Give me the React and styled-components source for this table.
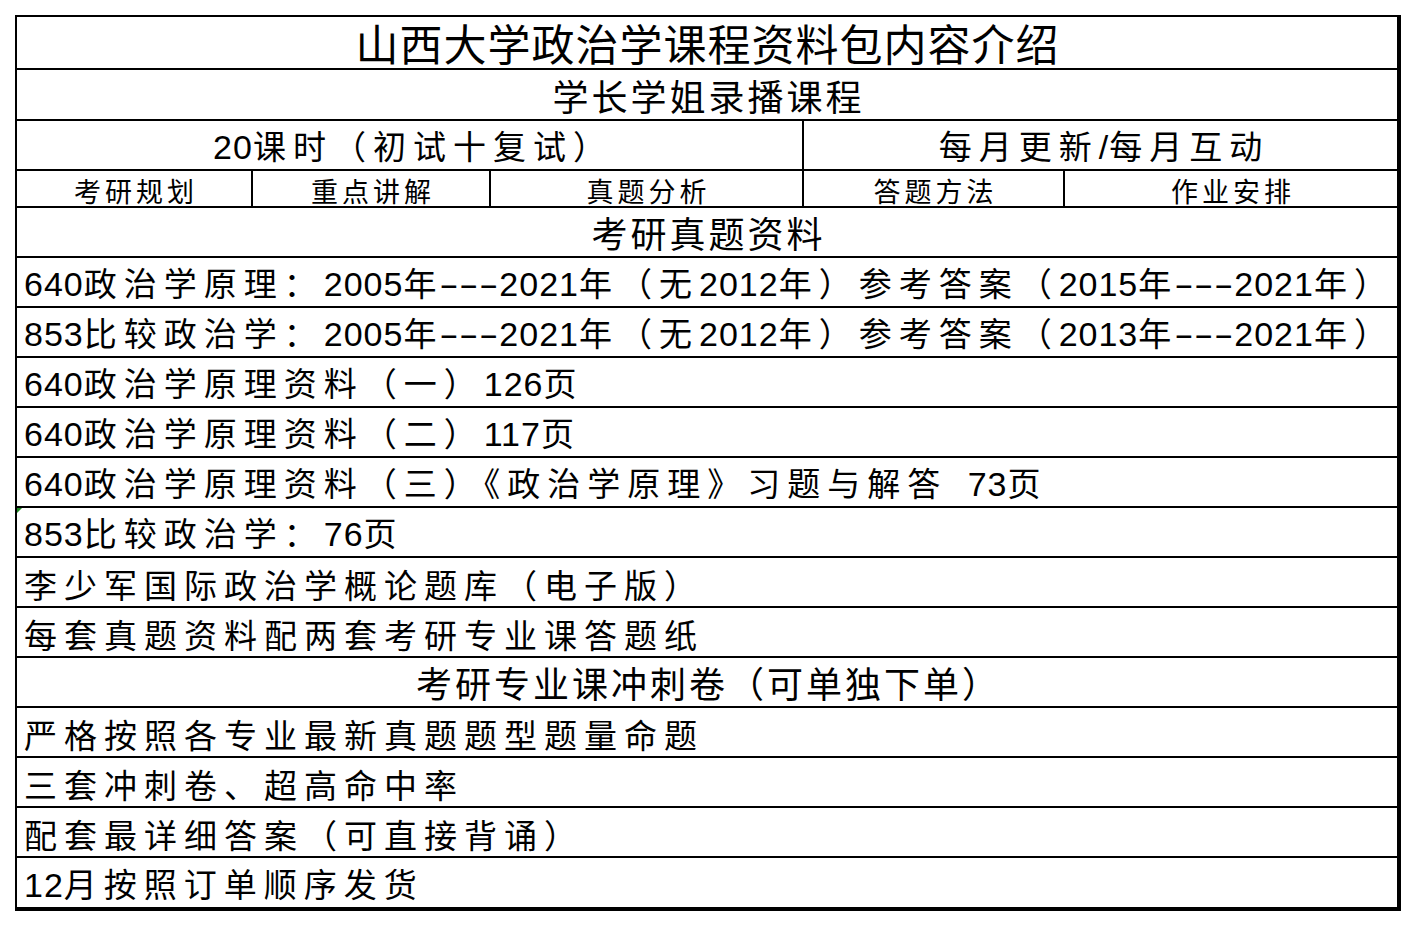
import React from "react";
import styled, { createGlobalStyle, css } from "styled-components";

const GlobalStyle = createGlobalStyle`
  html, body {
    margin: 0;
    padding: 0;
    background: #ffffff;
  }
  body {
    font-family: "Noto Sans CJK SC", sans-serif;
    color: #000000;
  }
`;

const Page = styled.div`
  padding: 15px 0 0 15px;
`;

const Sheet = styled.div`
  display: grid;
  grid-template-columns: 234px 236px 311px 259px 332px;
  grid-template-rows: 51px 49px 48px 35px repeat(13, 48px) 49px;
  gap: 2px;
  padding: 2px 4px 4px 2px;
  background: #000000;
  width: max-content;
`;

const variants = {
  title: css`
    font-size: 43px;
    letter-spacing: 1px;
    line-height: 1.1;
  `,
  heading: css`
    font-size: 36px;
    letter-spacing: 3px;
    line-height: 1.1;
  `,
  body: css`
    font-size: 33px;
    letter-spacing: 7px;
    line-height: 1.1;
  `,
  small: css`
    font-size: 27px;
    letter-spacing: 4px;
    line-height: 1;
  `,
};

const spacing = { title: 1, heading: 3, body: 7, small: 4 };

const Cell = styled.div`
  position: relative;
  background: #ffffff;
  grid-column: ${(p) => (p.$span === "all" ? "1 / -1" : `span ${p.$span || 1}`)};
  display: flex;
  align-items: center;
  justify-content: ${(p) => (p.$center ? "center" : "flex-start")};
  padding-left: ${(p) => (p.$center ? spacing[p.$variant || "body"] : 7)}px;
  padding-top: ${(p) => p.$drop || 0}px;
  white-space: pre;
  ${(p) => variants[p.$variant || "body"]}

  ${(p) =>
    p.$flag &&
    css`
      &::before {
        content: "";
        position: absolute;
        top: 0;
        left: 0;
        border-top: 5px solid #1f8a24;
        border-right: 5px solid transparent;
      }
    `}
`;

const Line = styled.span`
  display: inline;
`;

const Latin = styled.span`
  font-family: "Liberation Sans", Arial, sans-serif;
  font-size: 34px;
  letter-spacing: 1px;
  word-spacing: 10px;
`;

const Dash = styled.span`
  display: inline-block;
  font-family: "Liberation Sans", Arial, sans-serif;
  font-size: 34px;
  letter-spacing: 0;
  transform: scaleX(1.75);
  transform-origin: left center;
  margin: 0 26px 0 -4px;
`;

function Mixed({ text }) {
  const parts = text.split(/(-+|[\x20-\x7E]+)/).filter(Boolean);
  return (
    <Line>
      {parts.map((part, i) => {
        if (/^-+$/.test(part)) return <Dash key={i}>{part}</Dash>;
        if (/^[\x20-\x7E]+$/.test(part)) return <Latin key={i}>{part}</Latin>;
        return <span key={i}>{part}</span>;
      })}
    </Line>
  );
}

const subHeads = ["考研规划", "重点讲解", "真题分析", "答题方法", "作业安排"];

const papers = [
  { text: "640政治学原理：2005年---2021年（无2012年）参考答案（2015年---2021年）" },
  { text: "853比较政治学：2005年---2021年（无2012年）参考答案（2013年---2021年）" },
  { text: "640政治学原理资料（一）126页" },
  { text: "640政治学原理资料（二）117页" },
  { text: "640政治学原理资料（三）《政治学原理》习题与解答 73页" },
  { text: "853比较政治学：76页", flag: true },
  { text: "李少军国际政治学概论题库（电子版）" },
  { text: "每套真题资料配两套考研专业课答题纸" },
];

const sprint = [
  "严格按照各专业最新真题题型题量命题",
  "三套冲刺卷、超高命中率",
  "配套最详细答案（可直接背诵）",
  "12月按照订单顺序发货",
];

export default function App() {
  return (
    <Page>
      <GlobalStyle />
      <Sheet>
        <Cell $span="all" $center $variant="title">
          山西大学政治学课程资料包内容介绍
        </Cell>
        <Cell $span="all" $center $variant="heading" $drop={2}>
          学长学姐录播课程
        </Cell>
        <Cell $span={3} $center $drop={4}>
          <Mixed text="20课时（初试十复试）" />
        </Cell>
        <Cell $span={2} $center $drop={4}>
          <Mixed text="每月更新/每月互动" />
        </Cell>
        {subHeads.map((h) => (
          <Cell key={h} $center $variant="small" $drop={3}>
            {h}
          </Cell>
        ))}
        <Cell $span="all" $center $variant="heading" $drop={2}>
          考研真题资料
        </Cell>
        {papers.map((row) => (
          <Cell key={row.text} $span="all" $flag={row.flag} $drop={4}>
            <Mixed text={row.text} />
          </Cell>
        ))}
        <Cell $span="all" $center $variant="heading" $drop={2}>
          考研专业课冲刺卷（可单独下单）
        </Cell>
        {sprint.map((text) => (
          <Cell key={text} $span="all" $drop={4}>
            <Mixed text={text} />
          </Cell>
        ))}
      </Sheet>
    </Page>
  );
}
